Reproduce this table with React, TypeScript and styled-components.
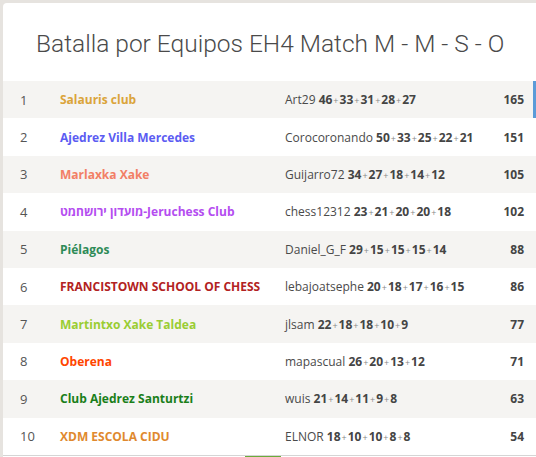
import React from 'react';
import styled, { createGlobalStyle } from 'styled-components';

type Team = {
  rank: number;
  name: string;
  color: string;
  player: string;
  scores: number[];
  total: number;
};

const teams: Team[] = [
  { rank: 1, name: 'Salauris club', color: '#dba43a', player: 'Art29', scores: [46, 33, 31, 28, 27], total: 165 },
  { rank: 2, name: 'Ajedrez Villa Mercedes', color: '#5b5cf2', player: 'Corocoronando', scores: [50, 33, 25, 22, 21], total: 151 },
  { rank: 3, name: 'Marlaxka Xake', color: '#f27f66', player: 'Guijarro72', scores: [34, 27, 18, 14, 12], total: 105 },
  { rank: 4, name: 'מועדון ירושחמט-Jeruchess Club', color: '#b44df0', player: 'chess12312', scores: [23, 21, 20, 20, 18], total: 102 },
  { rank: 5, name: 'Piélagos', color: '#2e8b57', player: 'Daniel_G_F', scores: [29, 15, 15, 15, 14], total: 88 },
  { rank: 6, name: 'FRANCISTOWN SCHOOL OF CHESS', color: '#b22222', player: 'lebajoatsephe', scores: [20, 18, 17, 16, 15], total: 86 },
  { rank: 7, name: 'Martintxo Xake Taldea', color: '#9acd32', player: 'jlsam', scores: [22, 18, 18, 10, 9], total: 77 },
  { rank: 8, name: 'Oberena', color: '#ff4500', player: 'mapascual', scores: [26, 20, 13, 12], total: 71 },
  { rank: 9, name: 'Club Ajedrez Santurtzi', color: '#1a7f1a', player: 'wuis', scores: [21, 14, 11, 9, 8], total: 63 },
  { rank: 10, name: 'XDM ESCOLA CIDU', color: '#e0892e', player: 'ELNOR', scores: [18, 10, 10, 8, 8], total: 54 },
];

const App: React.FC = () => {
  return (
    <>
      <GlobalStyle />
      <Card>
        <Header>
          <Title>Batalla por Equipos EH4 Match M - M - S - O</Title>
        </Header>
        <Table>
          {teams.map((t) => (
            <Row key={t.rank} $highlight={t.rank === 1}>
              <Rank>{t.rank}</Rank>
              <TeamName $color={t.color}>{t.name}</TeamName>
              <Players>
                {t.player}{' '}
                {t.scores.map((s, i) => (
                  <React.Fragment key={i}>
                    {i > 0 && <Plus>+</Plus>}
                    <Score>{s}</Score>
                  </React.Fragment>
                ))}
              </Players>
              <Total>{t.total}</Total>
            </Row>
          ))}
        </Table>
        <Footer>
          <FooterTab />
        </Footer>
      </Card>
    </>
  );
};

const GlobalStyle = createGlobalStyle`
  body {
    margin: 0;
    background: #e6e3df;
    font-family: 'Open Sans', 'Noto Sans', sans-serif;
    overflow: hidden;
  }
`;

const Card = styled.div`
  margin: 3px 0 0 3px;
  background: #fff;
  border-top-left-radius: 4px;
  overflow: hidden;
`;

const Header = styled.div`
  height: 78px;
  display: flex;
  align-items: center;
  padding-left: 33px;
`;

const Title = styled.h1`
  margin: 0;
  padding-top: 2px;
  font-family: Roboto, 'Liberation Sans', sans-serif;
  font-weight: 300;
  font-size: 24.5px;
  color: #4a4a4a;
  white-space: nowrap;
`;

const Table = styled.div`
  display: flex;
  flex-direction: column;
`;

const Row = styled.div<{ $highlight: boolean }>`
  height: 37.4px;
  display: grid;
  grid-template-columns: 40px 225px 1fr auto;
  align-items: center;
  padding: 0 9px 0 17px;
  box-sizing: border-box;
  background: #fff;
  border-right: 3px solid ${({ $highlight }) => ($highlight ? '#5b9bd8' : 'transparent')};
  &:nth-child(odd) {
    background: #f5f4f2;
  }
`;

const Rank = styled.span`
  font-size: 13px;
  color: #555;
`;

const TeamName = styled.span<{ $color: string }>`
  font-size: 12px;
  font-weight: 700;
  color: ${({ $color }) => $color};
  white-space: nowrap;
`;

const Players = styled.span`
  font-size: 12px;
  color: #4a4a4a;
  white-space: nowrap;
`;

const Score = styled.b`
  font-weight: 700;
  color: #444;
`;

const Plus = styled.span`
  font-size: 9px;
  color: #888;
  margin: 0 1px;
`;

const Total = styled.span`
  font-size: 12px;
  font-weight: 700;
  color: #444;
  text-align: right;
`;

const Footer = styled.div`
  border-top: 1px solid #d5d5d5;
  height: 4px;
  background: #fff;
  position: relative;
`;

const FooterTab = styled.div`
  position: absolute;
  top: 0;
  left: 242px;
  width: 36px;
  height: 3px;
  background: #6aab3a;
`;

export default App;
